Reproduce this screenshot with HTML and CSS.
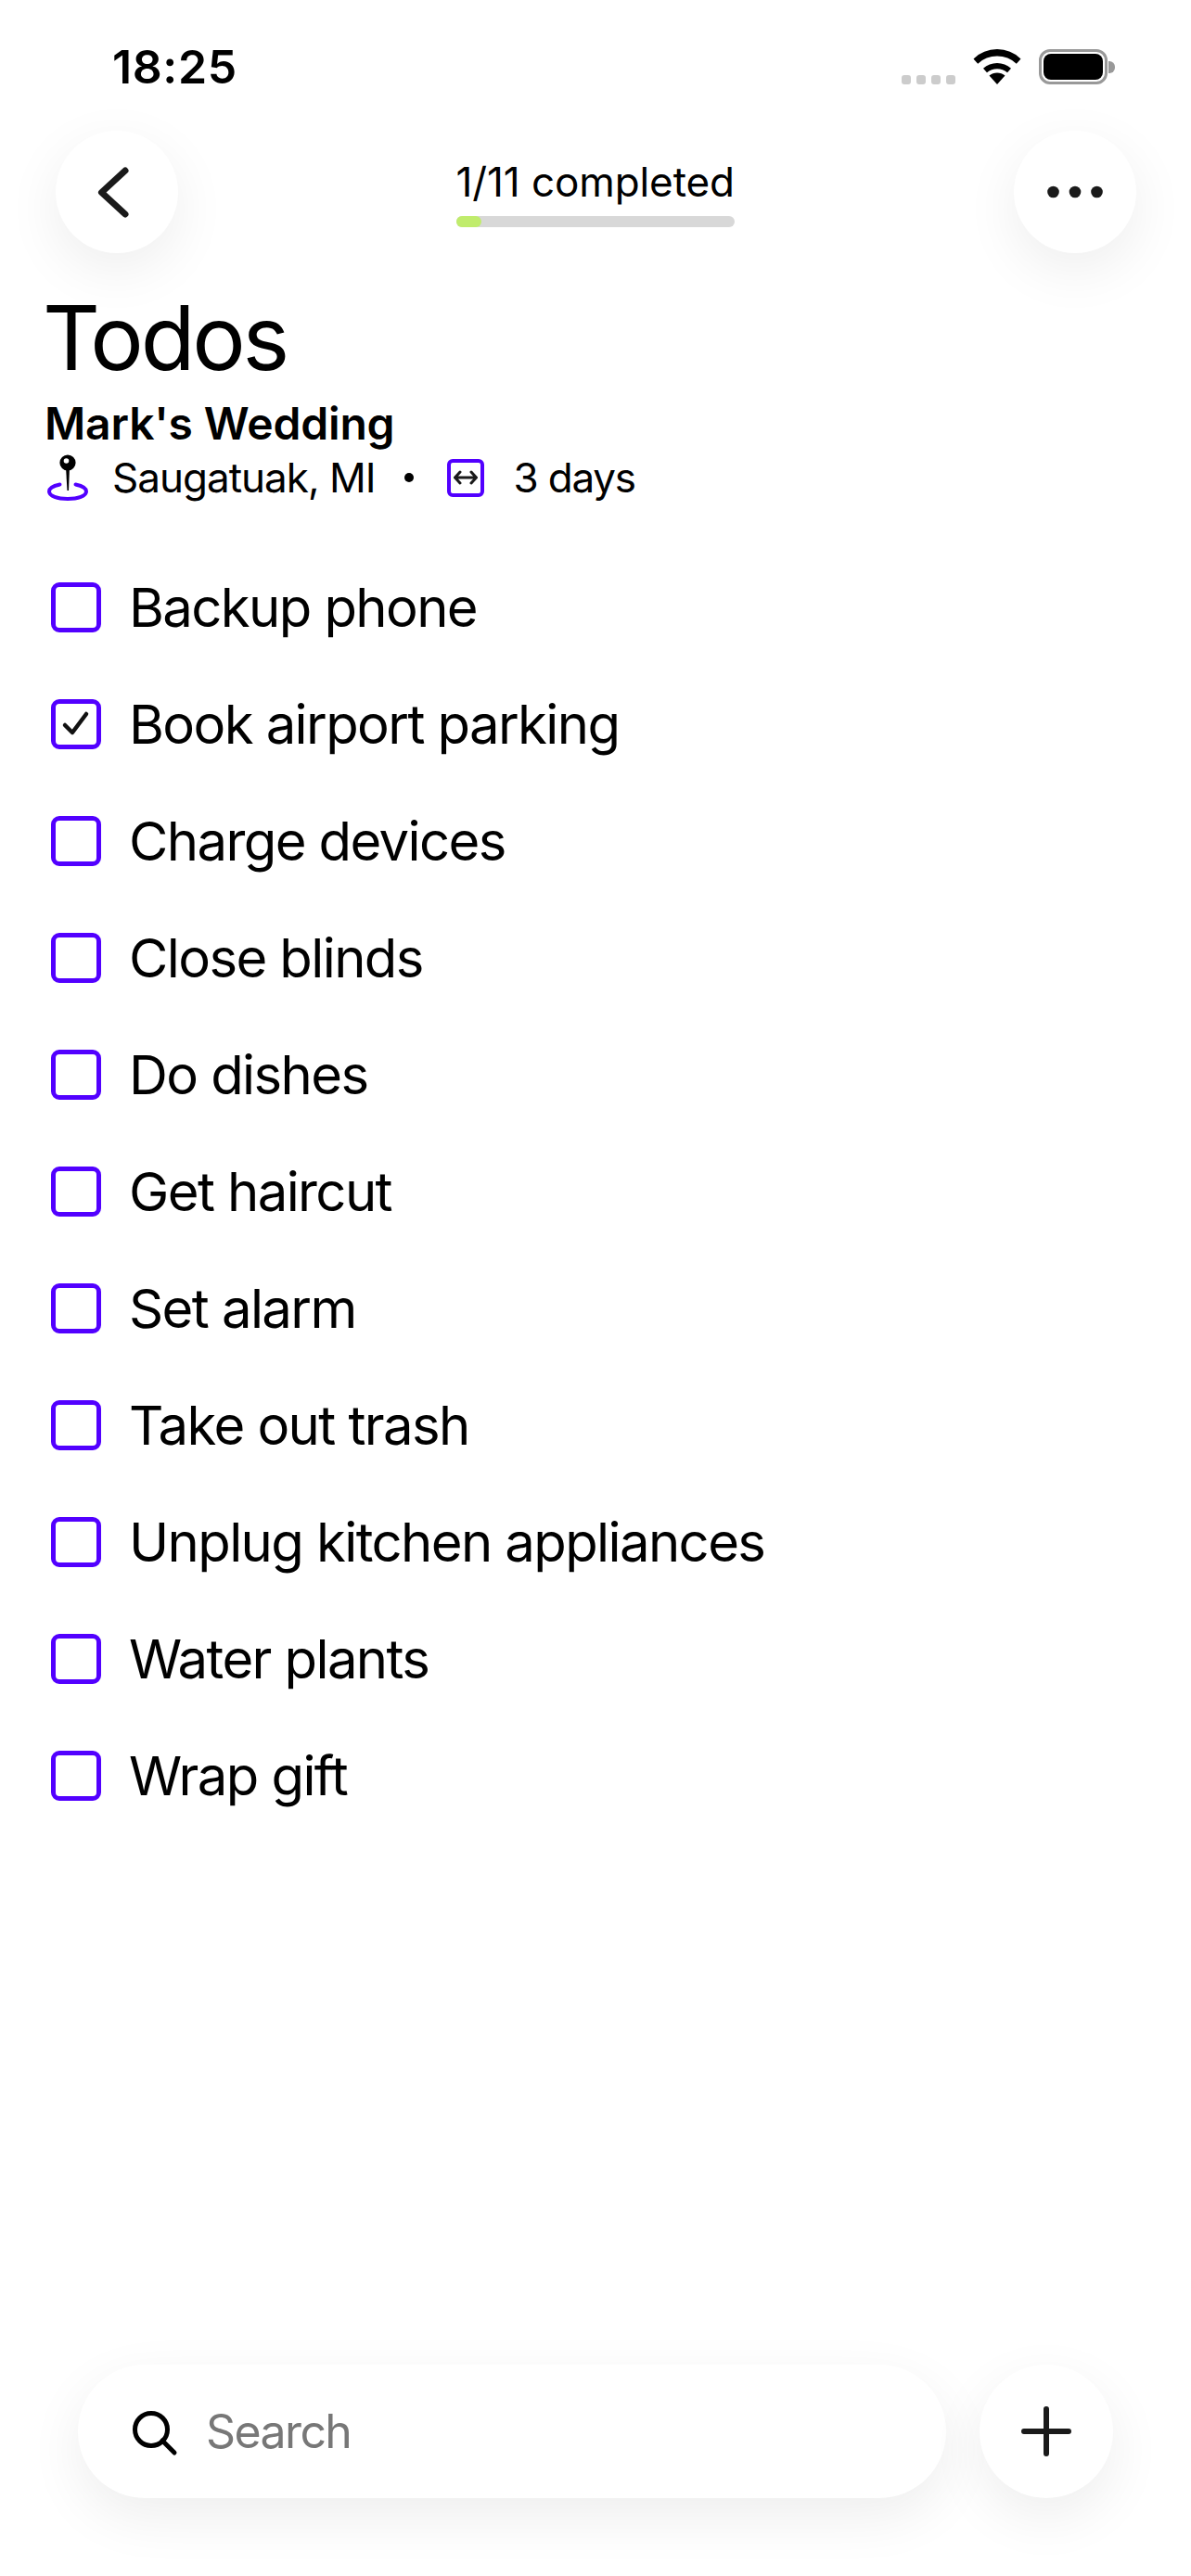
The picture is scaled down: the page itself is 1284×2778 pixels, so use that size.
FILE: index.html
```html
<!DOCTYPE html>
<html lang="en">
<head>
<meta charset="utf-8">
<title>Todos</title>
<link rel="stylesheet" href="styles.css">
</head>
<body>
<div class="page">
  <div class="status">
    <span class="time">18:25</span>
    <div class="status-icons">
      <div class="signal"><i></i><i></i><i></i><i></i></div>
      <svg class="wifi" width="52" height="38" viewBox="0 0 52 38"><path d="M26 38 L17.5 28.6 A13 13 0 0 1 34.5 28.6 Z"/><path d="M26 15 A23 23 0 0 1 41 20.8 L37 25.3 A17 17 0 0 0 15 25.3 L11 20.8 A23 23 0 0 1 26 15 Z"/><path d="M26 0 A37 37 0 0 1 51.5 10.4 L46.8 15.8 A30 30 0 0 0 5.2 15.8 L0.5 10.4 A37 37 0 0 1 26 0 Z"/></svg>
      <div class="battery"><div class="battery-fill"></div></div>
      <div class="battery-tip"></div>
    </div>
  </div>

  <header class="header">
    <button class="round" aria-label="Back">
      <svg width="44" height="66" viewBox="0 0 44 66"><path d="M31 10 L5.5 33.5 L31 57" class="chev"/></svg>
    </button>
    <div class="progress">
      <div class="progress-label">1/11 completed</div>
      <div class="bar"><div class="bar-fill"></div></div>
    </div>
    <button class="round" aria-label="More">
      <svg width="60" height="14" viewBox="0 0 60 14"><circle cx="6.5" cy="7" r="6.3"/><circle cx="30" cy="7" r="6.3"/><circle cx="53.5" cy="7" r="6.3"/></svg>
    </button>
  </header>

  <section class="heading">
    <h1 class="title">Todos</h1>
    <h2 class="subtitle">Mark's Wedding</h2>
    <div class="meta">
      <svg class="pin" width="48" height="50" viewBox="0 0 48 50"><path d="M14.5 32.5 C7 34 3 37 3 40 C3 45 12 48 23 48 C34 48 43 45 43 40 C43 37 39 34 31.5 32.5" class="ring"/><path d="M21 14 L25 14 L24 39 L22.5 39 Z"/><circle cx="23" cy="9" r="8.6"/><circle cx="21.5" cy="7" r="2.8" fill="#fff"/></svg>
      <span class="meta-place">Saugatuak, MI</span>
      <span class="meta-dot"></span>
      <span class="span-box"><svg width="26" height="16" viewBox="0 0 26 16"><path d="M1.5 8 H24.5 M7 2 L1.5 8 L7 14 M19 2 L24.5 8 L19 14" class="arrows"/></svg></span>
      <span class="meta-days">3 days</span>
    </div>
  </section>

  <ul class="list">
    <li class="item"><span class="box"></span>Backup phone</li>
    <li class="item"><span class="box"><svg width="34" height="34" viewBox="0 0 34 34"><path d="M5 18 L13 26 L28 6" class="tick"/></svg></span>Book airport parking</li>
    <li class="item"><span class="box"></span>Charge devices</li>
    <li class="item"><span class="box"></span>Close blinds</li>
    <li class="item"><span class="box"></span>Do dishes</li>
    <li class="item"><span class="box"></span>Get haircut</li>
    <li class="item"><span class="box"></span>Set alarm</li>
    <li class="item"><span class="box"></span>Take out trash</li>
    <li class="item"><span class="box"></span>Unplug kitchen appliances</li>
    <li class="item"><span class="box"></span>Water plants</li>
    <li class="item"><span class="box"></span>Wrap gift</li>
  </ul>

  <footer class="bottom">
    <div class="search">
      <svg width="50" height="50" viewBox="0 0 50 50"><circle cx="21" cy="21" r="17.5" class="lens"/><path d="M33 33 L46 46" class="lens"/></svg>
      <span class="search-label">Search</span>
    </div>
    <button class="add" aria-label="Add">
      <svg width="54" height="54" viewBox="0 0 54 54"><path d="M27 3 V51 M3 27 H51" class="plus"/></svg>
    </button>
  </footer>
</div>
</body>
</html>
```
FILE: styles.css
```css
* { box-sizing: border-box; }
html, body { margin: 0; padding: 0; background: #fff; }
.page {
  width: 1284px;
  height: 2778px;
  display: flex;
  flex-direction: column;
  font-family: Inter, "Liberation Sans", sans-serif;
  color: #000;
  overflow: hidden;
}
.status {
  height: 141px;
  flex: none;
  display: flex;
  justify-content: space-between;
  align-items: flex-start;
  padding: 53px 82px 0 121px;
}
.time { font-size: 50px; font-weight: 600; line-height: 38px; letter-spacing: 0.6px; }
.status-icons { display: flex; align-items: center; height: 38px; }
.signal { display: flex; gap: 6px; align-self: flex-end; margin-right: 19px; }
.signal i { width: 10px; height: 10px; border-radius: 3px; background: #ccc; }
.wifi { margin-right: 19px; }
.battery {
  width: 74px;
  height: 38px;
  border: 3px solid #999;
  border-radius: 12px;
  padding: 2px;
}
.battery-fill { width: 100%; height: 100%; background: #000; border-radius: 8px; }
.battery-tip { width: 7px; height: 13px; background: #999; border-radius: 0 6px 6px 0; margin-left: 1px; }

.header {
  height: 132px;
  flex: none;
  display: flex;
  justify-content: space-between;
  align-items: center;
  padding: 0 59px 0 60px;
}
button { border: 0; padding: 0; margin: 0; font: inherit; }
.round {
  width: 132px;
  height: 132px;
  border-radius: 50%;
  background: #fff;
  box-shadow: 0 18px 60px rgba(0, 0, 0, 0.07);
  display: flex;
  align-items: center;
  justify-content: center;
}
.round svg { fill: #1a1a1a; }
.chev { fill: none; stroke: #1a1a1a; stroke-width: 7; stroke-linecap: round; stroke-linejoin: round; }
.progress { width: 300px; display: flex; flex-direction: column; margin: 4px 0 0 -2px; }
.progress-label { font-size: 44px; line-height: 46px; white-space: nowrap; text-align: center; letter-spacing: -0.1px; }
.bar { height: 12px; background: #d8d8d8; border-radius: 6px; margin-top: 14px; }
.bar-fill { width: 27px; height: 12px; background: #c0ec6c; border-radius: 6px; }

.heading { padding-left: 46px; }
.title { margin: 46px 0 0; font-size: 96px; line-height: 90px; font-weight: 400; letter-spacing: -3.2px; }
.subtitle { margin: 20px 0 0 2px; font-size: 48px; line-height: 56px; font-weight: 600; letter-spacing: -0.15px; }
.meta { margin: 5px 0 0 4px; display: flex; align-items: center; height: 50px; font-size: 44px; }
.meta-place { margin-left: 23px; letter-spacing: -1px; }
.meta-dot { width: 10px; height: 10px; border-radius: 50%; background: #000; margin-left: 31px; }
.span-box {
  width: 40px;
  height: 41px;
  border: 4px solid #5200ff;
  border-radius: 6px;
  margin-left: 36px;
  display: flex;
  align-items: center;
  justify-content: center;
}
.meta-days { margin-left: 32px; letter-spacing: -1.2px; }
.pin { fill: #000; }
.ring { fill: none; stroke: #5200ff; stroke-width: 4; stroke-linecap: round; }
.arrows { fill: none; stroke: #1a1a1a; stroke-width: 3; stroke-linecap: round; stroke-linejoin: round; }

.list { list-style: none; margin: 52px 0 0; padding: 0 0 0 55px; }
.item { height: 126px; display: flex; align-items: center; font-size: 58px; letter-spacing: -1.6px; }
.box {
  width: 54px;
  height: 54px;
  flex: none;
  border: 5px solid #5200ff;
  border-radius: 9px;
  margin-right: 30px;
  display: flex;
  align-items: center;
  justify-content: center;
}
.tick { fill: none; stroke: #111; stroke-width: 4.5; stroke-linecap: round; stroke-linejoin: round; }

.bottom {
  margin-top: auto;
  display: flex;
  gap: 36px;
  padding: 0 84px 84px;
}
.search {
  flex: 1;
  height: 144px;
  border-radius: 72px;
  background: #fff;
  box-shadow: 0 20px 60px rgba(0, 0, 0, 0.07);
  display: flex;
  align-items: center;
  padding-left: 58px;
}
.search svg { margin-top: 4px; }
.lens { fill: none; stroke: #000; stroke-width: 5; stroke-linecap: round; }
.search-label { font-size: 50px; color: #777; margin-left: 30px; letter-spacing: -1.6px; }
.add {
  width: 144px;
  height: 144px;
  border-radius: 50%;
  background: #fff;
  box-shadow: 0 20px 60px rgba(0, 0, 0, 0.07);
  display: flex;
  align-items: center;
  justify-content: center;
}
.plus { fill: none; stroke: #1a1a1a; stroke-width: 6; stroke-linecap: round; }
```
